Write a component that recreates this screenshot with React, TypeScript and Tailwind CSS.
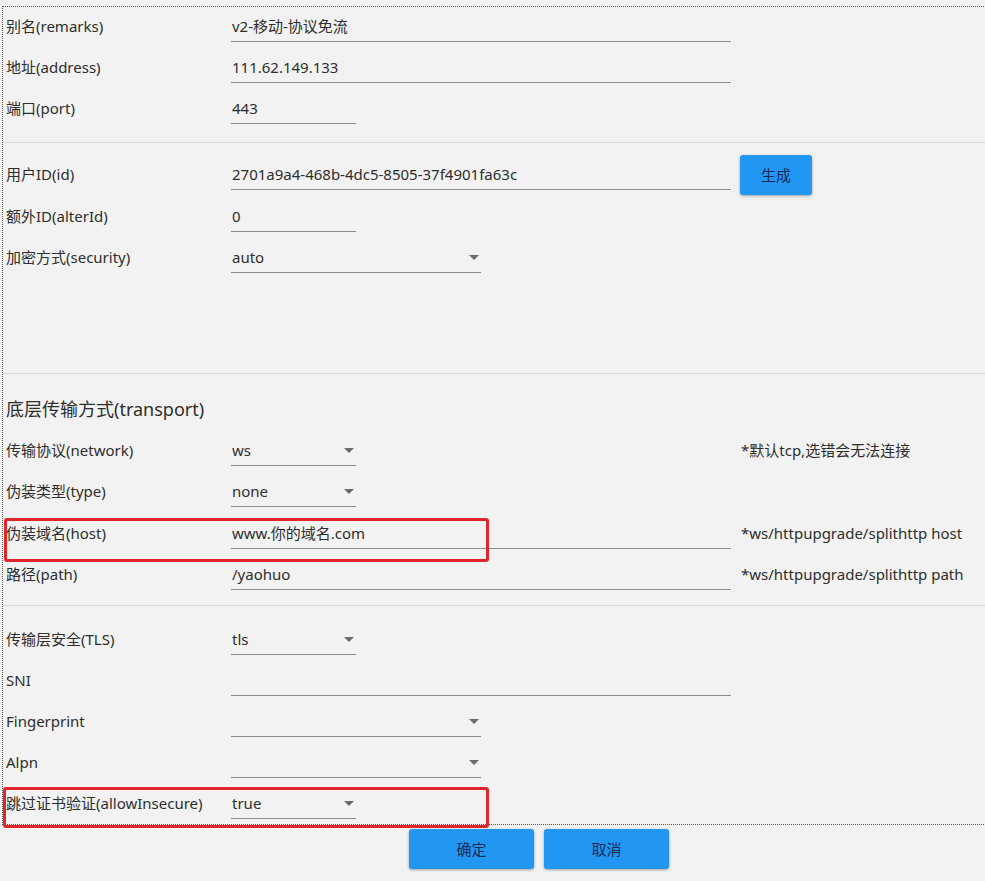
import React from "react";

const FONT = { fontFamily: "'Noto Sans', 'Noto Sans CJK SC', sans-serif" };

function Arrow() {
  return (
    <span className="absolute right-[2px] top-[11px] h-0 w-0 border-l-[5px] border-r-[5px] border-t-[5px] border-l-transparent border-r-transparent border-t-[#6b6b6b]" />
  );
}

function Field({ value, w, select }: { value?: string; w: string; select?: boolean }) {
  return (
    <div className={`relative h-[29px] border-b border-[#8c8c8c] pl-[1px] leading-[26px] text-[#2e2e2e] ${w}`}>
      {value}
      {select && <Arrow />}
    </div>
  );
}

function Row({
  label,
  value,
  w = "w-[500px]",
  select,
  note,
  h = "h-[41px]",
  children,
}: {
  label: string;
  value?: string;
  w?: string;
  select?: boolean;
  note?: string;
  h?: string;
  children?: React.ReactNode;
}) {
  return (
    <div className={`relative flex items-start ${h}`}>
      <div className="w-[228px] shrink-0 pl-[3px] leading-[26px] text-[#2e2e2e]">{label}</div>
      <div className="w-[500px] shrink-0">
        <Field value={value} w={w} select={select} />
      </div>
      {note && <div className="ml-[10px] leading-[26px] text-[#2e2e2e]">{note}</div>}
      {children}
    </div>
  );
}

export default function App() {
  return (
    <div className="h-[881px] w-[985px] overflow-hidden bg-[#f2f2f2] text-[15px]" style={FONT}>
      <div className="pl-[2px] pt-[6px]">
        <div className="w-[1100px] border border-dotted border-[#555]">
          {/* section 1 */}
          <div className="pb-[6px] pt-[6px]">
            <Row label="别名(remarks)" value="v2-移动-协议免流" />
            <Row label="地址(address)" value="111.62.149.133" />
            <Row label="端口(port)" value="443" w="w-[125px]" />
          </div>
          {/* section 2 */}
          <div className="h-[231px] border-t border-[#d9d9d9] pt-[18px]">
            <Row label="用户ID(id)" value="2701a9a4-468b-4dc5-8505-37f4901fa63c" h="h-[41.5px]">
              <button className="-mt-[6px] ml-[9px] h-[40px] w-[72px] rounded-[3px] bg-[#2196f3] text-[#1b2a55] shadow-[0_1px_3px_rgba(0,0,0,0.35)]">
                生成
              </button>
            </Row>
            <Row label="额外ID(alterId)" value="0" w="w-[125px]" h="h-[41.5px]" />
            <Row label="加密方式(security)" value="auto" w="w-[250px]" select h="h-[41.5px]" />
          </div>
          {/* section 3 */}
          <div className="border-t border-[#d9d9d9] pb-[4px] pt-[22px]">
            <div className="mb-[14px] pl-[3px] text-[18px] leading-[27px] text-[#2e2e2e]">底层传输方式(transport)</div>
            <Row label="传输协议(network)" value="ws" w="w-[125px]" select note="*默认tcp,选错会无法连接" h="h-[41.3px]" />
            <Row label="伪装类型(type)" value="none" w="w-[125px]" select h="h-[41.3px]" />
            <Row label="伪装域名(host)" value="www.你的域名.com" note="*ws/httpupgrade/splithttp host" h="h-[41.3px]">
              <div className="pointer-events-none absolute left-[1px] top-[-2px] z-10 h-[44px] w-[485px] rounded-[3px] border-[3px] border-[#e0262a]" />
            </Row>
            <Row label="路径(path)" value="/yaohuo" note="*ws/httpupgrade/splithttp path" h="h-[40.3px]" />
          </div>
          {/* section 4 */}
          <div className="border-t border-[#d9d9d9] pt-[20px]">
            <Row label="传输层安全(TLS)" value="tls" w="w-[125px]" select />
            <Row label="SNI" value="" />
            <Row label="Fingerprint" value="" w="w-[250px]" select />
            <Row label="Alpn" value="" w="w-[250px]" select />
            <Row label="跳过证书验证(allowInsecure)" value="true" w="w-[125px]" select h="h-[34px]">
              <div className="pointer-events-none absolute left-0 top-[-3px] z-10 h-[41px] w-[486px] rounded-[3px] border-[3px] border-[#e0262a]" />
            </Row>
          </div>
        </div>
        <div className="mt-[4px] flex gap-[10px] pl-[407px]">
          <button className="h-[40px] w-[125px] rounded-[3px] bg-[#2196f3] text-[#1b2a55] shadow-[0_1px_3px_rgba(0,0,0,0.35)]">
            确定
          </button>
          <button className="h-[40px] w-[125px] rounded-[3px] bg-[#2196f3] text-[#1b2a55] shadow-[0_1px_3px_rgba(0,0,0,0.35)]">
            取消
          </button>
        </div>
      </div>
    </div>
  );
}
